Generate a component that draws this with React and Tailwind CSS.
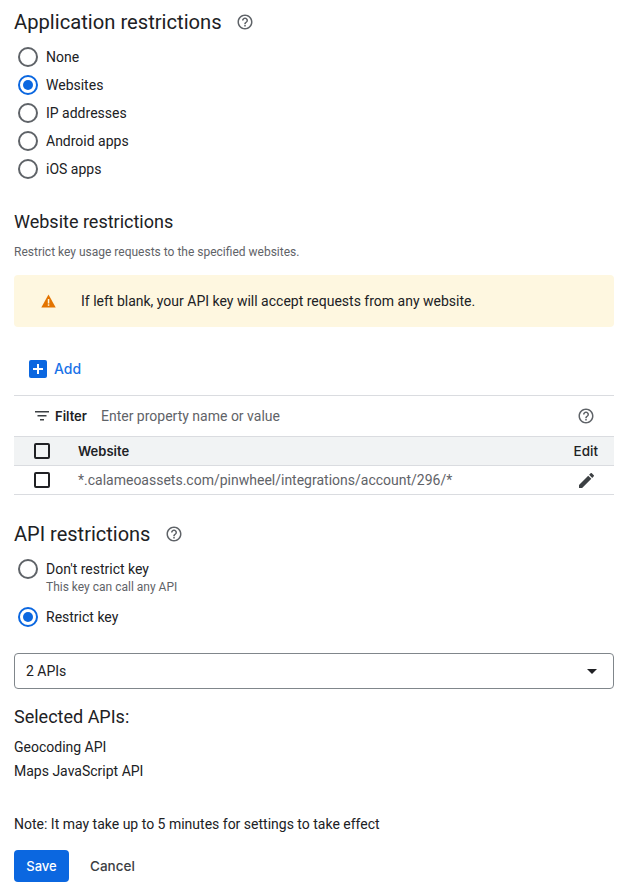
import React from 'react';

const font = { fontFamily: 'Roboto, sans-serif' };
const sans = { fontFamily: 'Inter, sans-serif' };

function Radio({ checked, label, sub }) {
  return (
    <div className="flex items-start h-7 pl-[18px]">
      <div className="flex flex-col">
        <div className="flex items-center h-7">
          <span className={`flex items-center justify-center w-5 h-5 rounded-full border-2 ${checked ? 'border-[#0b67e0]' : 'border-[#5f6368]'}`}>
            {checked && <span className="w-2.5 h-2.5 rounded-full bg-[#0b67e0]" />}
          </span>
          <span className="ml-2 text-sm text-[#202124]">{label}</span>
        </div>
        {sub && <div className="ml-7 -mt-1 text-xs leading-4 text-[#5f6368]">{sub}</div>}
      </div>
    </div>
  );
}

function HelpIcon({ size = 18 }) {
  return (
    <svg width={size} height={size} viewBox="0 0 24 24" fill="#5f6368" className="shrink-0">
      <path d="M11 18h2v-2h-2v2zm1-16C6.48 2 2 6.48 2 12s4.48 10 10 10 10-4.48 10-10S17.52 2 12 2zm0 18c-4.41 0-8-3.59-8-8s3.59-8 8-8 8 3.59 8 8-3.59 8-8 8zm0-14c-2.21 0-4 1.79-4 4h2c0-1.1.9-2 2-2s2 .9 2 2c0 2-3 1.75-3 5h2c0-2.25 3-2.5 3-5 0-2.21-1.79-4-4-4z" />
    </svg>
  );
}

function Checkbox() {
  return <span className="block w-4 h-4 rounded-[2px] border-2 border-[#202124] shrink-0" />;
}

export default function App() {
  return (
    <div className="w-[629px] h-[896px] bg-white overflow-hidden" style={font}>
      <div className="pl-[14px] pr-[15px]">
        {/* Application restrictions */}
        <div className="flex items-center h-7 mt-2 text-[20.2px] text-[#202124]">
          Application restrictions
          <span className="ml-[14px] flex"><HelpIcon /></span>
        </div>
        <div className="-ml-[14px] mt-[7px]">
          <Radio label="None" />
          <Radio label="Websites" checked />
          <Radio label="IP addresses" />
          <Radio label="Android apps" />
          <Radio label="iOS apps" />
        </div>

        {/* Website restrictions */}
        <div className="mt-[27px] text-lg leading-6 text-[#202124]">Website restrictions</div>
        <div className="mt-[10px] text-xs leading-4 text-[#5f6368]">Restrict key usage requests to the specified websites.</div>

        <div className="flex items-center h-[52px] mt-[15px] rounded bg-[#fef7e0] pl-[27px]">
          <svg width="15" height="14" viewBox="0 0 15 14" className="shrink-0">
            <path d="M7.5 0.5 L14.7 13.5 H0.3 Z" fill="#e37400" />
            <rect x="6.8" y="5" width="1.5" height="4.5" fill="#fef7e0" />
            <rect x="6.8" y="10.3" width="1.5" height="1.5" fill="#fef7e0" />
          </svg>
          <span className="ml-[25px] text-sm text-[#202124]">If left blank, your API key will accept requests from any website.</span>
        </div>

        {/* Add */}
        <div className="flex items-center h-[18px] mt-[33px] pl-[15px]">
          <span className="flex items-center justify-center w-[18px] h-[18px] rounded-[2px] bg-[#0b67e0]">
            <svg width="12" height="12" viewBox="0 0 12 12" fill="#fff">
              <path d="M5 1h2v4h4v2H7v4H5V7H1V5h4z" />
            </svg>
          </span>
          <span className="ml-[7px] text-sm font-medium text-[#1a73e8]" style={sans}>Add</span>
        </div>

        {/* Table */}
        <div className="mt-[17px] border-t border-[#dadce0]">
          <div className="flex items-center h-10 pl-[21px] pr-[19px]">
            <svg width="14" height="10" viewBox="0 0 14 10" fill="#3c4043" className="shrink-0">
              <rect x="0" y="0" width="14" height="1.5" />
              <rect x="2.5" y="4" width="9" height="1.5" />
              <rect x="5" y="8" width="4" height="1.5" />
            </svg>
            <span className="ml-[6px] mt-[2px] text-[13px] font-semibold text-[#202124]" style={sans}>Filter</span>
            <span className="ml-[14px] flex-1 text-sm text-[#5f6368]">Enter property name or value</span>
            <HelpIcon />
          </div>
          <div className="flex items-center h-[30px] border-y border-[#dadce0] bg-[#f1f3f4] pl-5 pr-4">
            <Checkbox />
            <span className="ml-[28px] mt-[2px] flex-1 text-[13px] font-semibold text-[#202124]" style={sans}>Website</span>
            <span className="mt-[1px] text-[13.5px] font-medium text-[#202124]" style={sans}>Edit</span>
          </div>
          <div className="flex items-center h-[29px] border-b border-[#dadce0] pl-5 pr-5">
            <Checkbox />
            <span className="ml-[28px] flex-1 text-sm text-[#5f6368]">*.calameoassets.com/pinwheel/integrations/account/296/*</span>
            <svg width="15" height="15" viewBox="3 3 18 18" fill="#3c4043" className="shrink-0">
              <path d="M3 17.25V21h3.75L17.81 9.94l-3.75-3.75L3 17.25zM20.71 7.04a1 1 0 0 0 0-1.41l-2.34-2.34a1 1 0 0 0-1.41 0l-1.83 1.83 3.75 3.75 1.83-1.83z" />
            </svg>
          </div>
        </div>

        {/* API restrictions */}
        <div className="flex items-center h-7 mt-[25px] text-[20px] text-[#202124]">
          API restrictions
          <span className="ml-[15px] flex"><HelpIcon /></span>
        </div>
        <div className="-ml-[14px] mt-[7px]">
          <div className="h-[35px]"><Radio label="Don't restrict key" sub="This key can call any API" /></div>
          <div className="pt-[13px]"><Radio label="Restrict key" checked /></div>
        </div>

        {/* Select */}
        <div className="flex items-center justify-between h-9 mt-[22px] rounded border border-[#80868b] pl-[11px] pr-[16px] text-sm text-[#202124]">
          2 APIs
          <span className="w-0 h-0 border-x-[5px] border-x-transparent border-t-[5px] border-t-[#202124]" />
        </div>

        <div className="mt-4 text-lg leading-6 text-[#202124]">Selected APIs:</div>
        <div className="mt-[6px] text-sm leading-6 text-[#202124]">Geocoding API</div>
        <div className="text-sm leading-6 text-[#202124]">Maps JavaScript API</div>
        <div className="mt-[29px] text-sm leading-6 text-[#202124]">Note: It may take up to 5 minutes for settings to take effect</div>

        {/* Actions */}
        <div className="flex items-center mt-[14px]">
          <button className="w-[55px] h-8 rounded bg-[#0b67e0] pt-[2px] text-[13px] font-medium text-white" style={sans}>Save</button>
          <button className="ml-[21px] mt-[1px] text-[13.5px] font-medium text-[#3c4043]" style={sans}>Cancel</button>
        </div>
      </div>
    </div>
  );
}
